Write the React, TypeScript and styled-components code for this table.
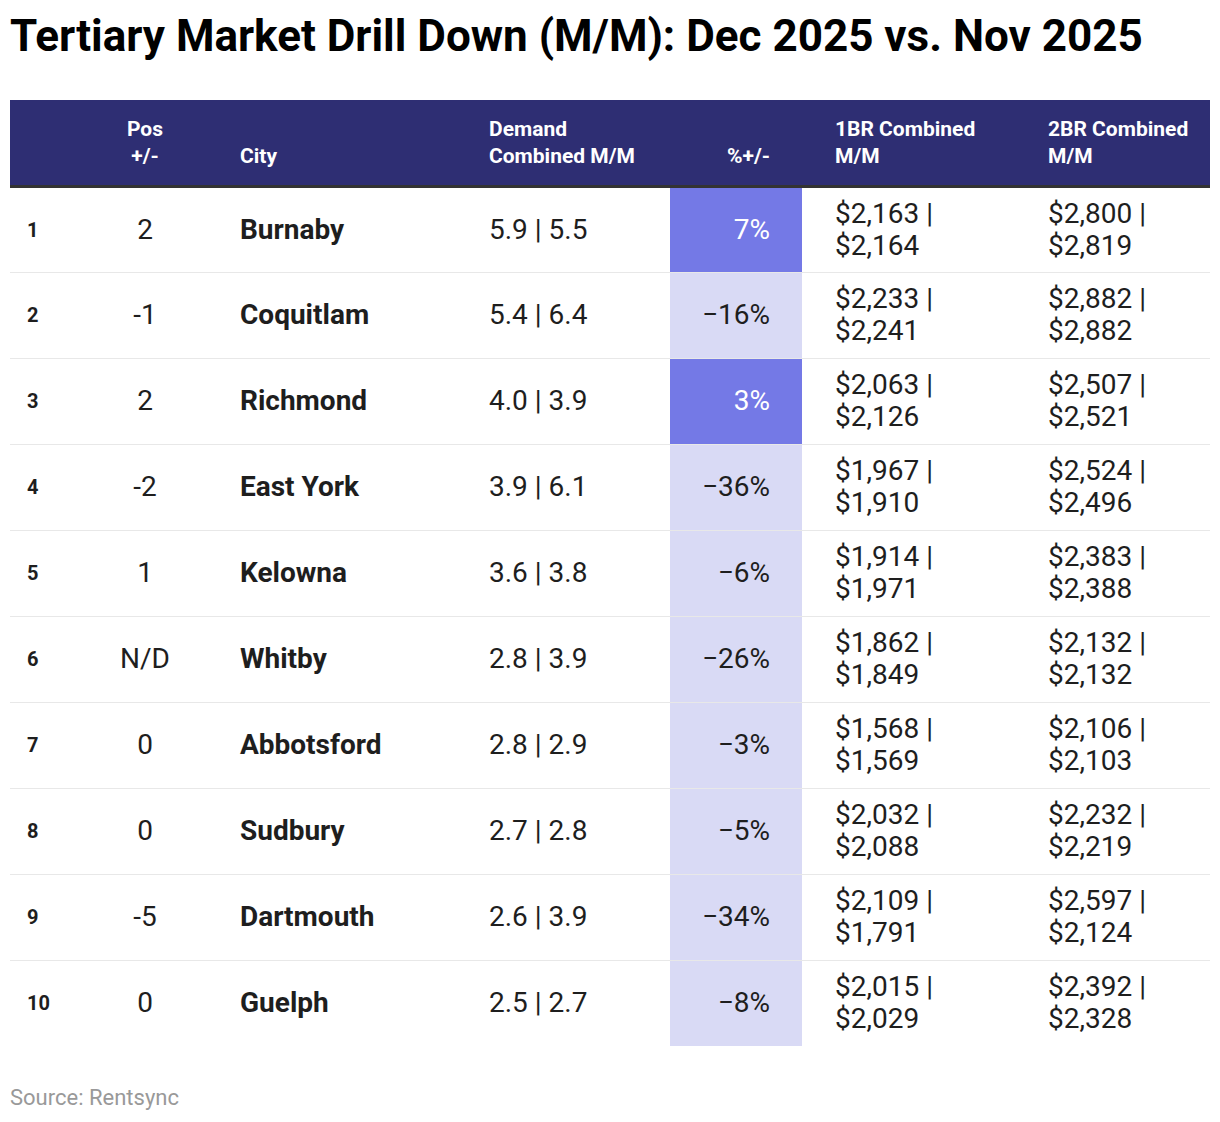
import styled, { createGlobalStyle } from "styled-components";

interface Row {
    rank: number;
    pos: string;
    city: string;
    demand: string;
    change: string;
    strong: boolean;
    br1: [string, string];
    br2: [string, string];
}

const rows: Row[] = [
    { rank: 1, pos: "2", city: "Burnaby", demand: "5.9 | 5.5", change: "7%", strong: true, br1: ["$2,163 |", "$2,164"], br2: ["$2,800 |", "$2,819"] },
    { rank: 2, pos: "-1", city: "Coquitlam", demand: "5.4 | 6.4", change: "−16%", strong: false, br1: ["$2,233 |", "$2,241"], br2: ["$2,882 |", "$2,882"] },
    { rank: 3, pos: "2", city: "Richmond", demand: "4.0 | 3.9", change: "3%", strong: true, br1: ["$2,063 |", "$2,126"], br2: ["$2,507 |", "$2,521"] },
    { rank: 4, pos: "-2", city: "East York", demand: "3.9 | 6.1", change: "−36%", strong: false, br1: ["$1,967 |", "$1,910"], br2: ["$2,524 |", "$2,496"] },
    { rank: 5, pos: "1", city: "Kelowna", demand: "3.6 | 3.8", change: "−6%", strong: false, br1: ["$1,914 |", "$1,971"], br2: ["$2,383 |", "$2,388"] },
    { rank: 6, pos: "N/D", city: "Whitby", demand: "2.8 | 3.9", change: "−26%", strong: false, br1: ["$1,862 |", "$1,849"], br2: ["$2,132 |", "$2,132"] },
    { rank: 7, pos: "0", city: "Abbotsford", demand: "2.8 | 2.9", change: "−3%", strong: false, br1: ["$1,568 |", "$1,569"], br2: ["$2,106 |", "$2,103"] },
    { rank: 8, pos: "0", city: "Sudbury", demand: "2.7 | 2.8", change: "−5%", strong: false, br1: ["$2,032 |", "$2,088"], br2: ["$2,232 |", "$2,219"] },
    { rank: 9, pos: "-5", city: "Dartmouth", demand: "2.6 | 3.9", change: "−34%", strong: false, br1: ["$2,109 |", "$1,791"], br2: ["$2,597 |", "$2,124"] },
    { rank: 10, pos: "0", city: "Guelph", demand: "2.5 | 2.7", change: "−8%", strong: false, br1: ["$2,015 |", "$2,029"], br2: ["$2,392 |", "$2,328"] },
];

export default function App() {
    return (
        <>
            <GlobalStyle />
            <Page>
                <Title>Tertiary Market Drill Down (M/M): Dec 2025 vs. Nov 2025</Title>
                <Table>
                    <colgroup>
                        <col style={{ width: 90 }} />
                        <col style={{ width: 90 }} />
                        <col style={{ width: 283 }} />
                        <col style={{ width: 197 }} />
                        <col style={{ width: 132 }} />
                        <col style={{ width: 213 }} />
                        <col style={{ width: 195 }} />
                    </colgroup>
                    <thead>
                        <tr>
                            <Th $pad="0 0 15px 17px"></Th>
                            <Th $align="center" $pad="0 0 15px 0">
                                Pos
                                <br />
                                +/-
                            </Th>
                            <Th $pad="0 0 15px 50px">City</Th>
                            <Th $pad="0 0 15px 16px">
                                Demand
                                <br />
                                Combined M/M
                            </Th>
                            <Th $align="right" $pad="0 32px 15px 0">%+/-</Th>
                            <Th $pad="0 0 15px 33px">
                                1BR Combined
                                <br />
                                M/M
                            </Th>
                            <Th $pad="0 0 15px 33px">
                                2BR Combined
                                <br />
                                M/M
                            </Th>
                        </tr>
                    </thead>
                    <tbody>
                        {rows.map((r, i) => {
                            const last = i === rows.length - 1;
                            return (
                                <tr key={r.rank}>
                                    <RankCell $last={last}>{r.rank}</RankCell>
                                    <Td $last={last} $align="center">{r.pos}</Td>
                                    <CityCell $last={last}>{r.city}</CityCell>
                                    <Td $last={last} $pad="0 0 0 16px">{r.demand}</Td>
                                    <ChangeCell $last={last} $strong={r.strong}>{r.change}</ChangeCell>
                                    <Td $last={last} $pad="0 0 0 33px">
                                        {r.br1[0]}
                                        <br />
                                        {r.br1[1]}
                                    </Td>
                                    <Td $last={last} $pad="0 0 0 33px">
                                        {r.br2[0]}
                                        <br />
                                        {r.br2[1]}
                                    </Td>
                                </tr>
                            );
                        })}
                    </tbody>
                </Table>
                <Source>Source: Rentsync</Source>
            </Page>
        </>
    );
}

const GlobalStyle = createGlobalStyle`
    body {
        margin: 0;
        background: #ffffff;
        font-family: Roboto, "Liberation Sans", sans-serif;
    }
`;

const Page = styled.div`
    width: 1220px;
    height: 1122px;
    padding: 12px 10px 0;
    box-sizing: border-box;
`;

const Title = styled.h1`
    margin: 0 0 40px;
    font-size: 44px;
    line-height: 48px;
    font-weight: 700;
    color: #000000;
    white-space: nowrap;
`;

const Table = styled.table`
    width: 1200px;
    border-collapse: collapse;
    table-layout: fixed;
`;

const Th = styled.th<{ $align?: string; $pad: string }>`
    height: 86px;
    box-sizing: border-box;
    background: #2e2e73;
    color: #ffffff;
    font-size: 21px;
    line-height: 27px;
    font-weight: 700;
    text-align: ${({ $align }) => $align ?? "left"};
    vertical-align: bottom;
    white-space: nowrap;
    padding: ${({ $pad }) => $pad};
    border-bottom: 3px solid #333333;
`;

const Td = styled.td<{ $align?: string; $pad?: string; $last?: boolean }>`
    height: 86px;
    box-sizing: border-box;
    padding: ${({ $pad }) => $pad ?? "0"};
    font-size: 28px;
    line-height: 32px;
    color: #1e1e1e;
    text-align: ${({ $align }) => $align ?? "left"};
    vertical-align: middle;
    white-space: nowrap;
    border-bottom: ${({ $last }) => ($last ? "none" : "1px solid #e8e8e8")};
`;

const RankCell = styled(Td)`
    padding-left: 17px;
    font-size: 20px;
    font-weight: 700;
`;

const CityCell = styled(Td)`
    padding-left: 50px;
    font-weight: 700;
`;

const ChangeCell = styled(Td)<{ $strong: boolean }>`
    text-align: right;
    padding-right: 32px;
    background: ${({ $strong }) => ($strong ? "#7479e6" : "#d9daf5")};
    color: ${({ $strong }) => ($strong ? "#ffffff" : "#1e1e1e")};
`;

const Source = styled.div`
    margin-top: 39px;
    font-size: 22px;
    line-height: 26px;
    color: #999999;
`;
